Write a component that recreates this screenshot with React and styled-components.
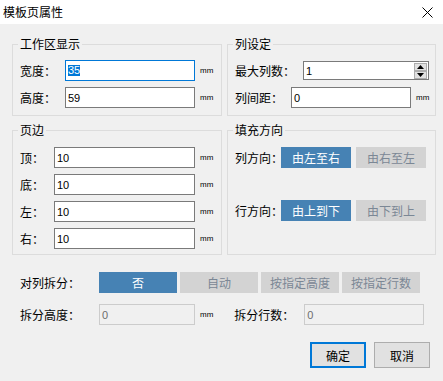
import React from 'react';
import styled, { createGlobalStyle } from 'styled-components';

const Global = createGlobalStyle`
  html, body { margin: 0; padding: 0; background: #f0f0f0; }
  body {
    font-family: "Noto Sans CJK SC", "Microsoft YaHei", sans-serif;
    font-size: 12px;
    color: #000;
  }
  * { box-sizing: border-box; }
`;

const Window = styled.div`
  width: 443px;
  height: 381px;
  background: #f0f0f0;
  display: flex;
  flex-direction: column;
  overflow: hidden;
`;

const TitleBar = styled.div`
  flex: none;
  height: 24px;
  background: #fff;
  display: flex;
  align-items: center;
  justify-content: space-between;
  padding: 0 10px 0 3px;
`;

const Title = styled.span`
  font-size: 12px;
  line-height: 14px;
`;

const Body = styled.div`
  padding: 12px 7px 0 12px;
  display: flex;
  flex-direction: column;
`;

const Groups = styled.div`
  display: grid;
  grid-template-columns: 210px 209px;
  column-gap: 5px;
  row-gap: 6px;
`;

const Group = styled.fieldset`
  margin: 0;
  padding: 0;
  min-width: 0;
  border: 1px solid #dcdcdc;
`;

const Legend = styled.legend`
  margin-left: 5px;
  padding: 0 2px;
  font-size: 12px;
  line-height: 16px;
`;

const GroupInner = styled.div`
  display: flex;
  flex-direction: column;
  gap: ${p => p.$gap}px;
  padding: ${p => p.$pt}px 0 ${p => p.$pb}px 7px;
`;

const Row = styled.div`
  display: flex;
  align-items: center;
  height: 21px;
`;

const Label = styled.span`
  flex: none;
  width: ${p => p.$w}px;
  font-size: 12px;
  white-space: nowrap;
`;

const Field = styled.div`
  flex: none;
  width: ${p => p.$w}px;
  height: ${p => p.$h || 21}px;
  border: 1px solid ${p => (p.$focus ? '#0078d7' : p.$disabled ? '#cccccc' : '#7a7a7a')};
  background: ${p => (p.$disabled ? '#f0f0f0' : '#fff')};
  color: ${p => (p.$disabled ? '#6d6d6d' : '#000')};
  display: flex;
  align-items: center;
  padding-left: 2px;
  font-family: "Liberation Sans", Arial, sans-serif;
  font-size: 11px;
`;

const Selected = styled.span`
  background: #0078d7;
  color: #fff;
  line-height: 11px;
`;

const Unit = styled.span`
  flex: none;
  margin-left: ${p => p.$ml || 6}px;
  margin-right: ${p => p.$mr || 0}px;
  font-family: "Liberation Sans", Arial, sans-serif;
  font-size: 8px;
  color: #000;
`;

const Spin = styled.div`
  margin-left: auto;
  margin-right: 1px;
  display: flex;
  flex-direction: column;
`;

const SpinBtn = styled.div`
  width: 13px;
  height: 8px;
  background: #e1e1e1;
  border: 1px solid #adadad;
  display: flex;
  align-items: center;
  justify-content: center;
`;

const ToggleRow = styled.div`
  display: flex;
  gap: ${p => p.$gap}px;
`;

const Toggle = styled.div`
  flex: none;
  width: ${p => p.$w}px;
  height: 21px;
  background: ${p => (p.$active ? '#4682b4' : '#d3d3d3')};
  color: ${p => (p.$active ? '#fff' : '#7b8795')};
  display: flex;
  align-items: center;
  justify-content: center;
  font-size: 12px;
`;

const Bottom = styled.div`
  display: flex;
  flex-direction: column;
  padding-left: 8px;
  margin-top: 17px;
  gap: 11px;
`;

const Footer = styled.div`
  display: flex;
  justify-content: flex-end;
  gap: 8px;
  margin-top: 17px;
  padding-right: 6px;
`;

const DlgButton = styled.button`
  width: 56px;
  height: 26px;
  padding: 0;
  background: #e1e1e1;
  border: ${p => (p.$default ? '2px solid #0078d7' : '1px solid #adadad')};
  font-family: "Noto Sans CJK SC", sans-serif;
  font-size: 12px;
  color: #000;
`;

const Tri = ({ up }) => (
  <svg width="7" height="4" viewBox="0 0 7 4">
    <polygon points={up ? '3.5,0 7,4 0,4' : '0,0 7,0 3.5,4'} fill="#000" />
  </svg>
);

const CloseIcon = () => (
  <svg width="11" height="11" viewBox="0 0 11 11">
    <path d="M0.5 0.5 L10.5 10.5 M10.5 0.5 L0.5 10.5" stroke="#000" strokeWidth="1" />
  </svg>
);

export default function App() {
  return (
    <>
      <Global />
      <Window>
        <TitleBar>
          <Title>模板页属性</Title>
          <CloseIcon />
        </TitleBar>
        <Body>
          <Groups>
            <Group>
              <Legend>工作区显示</Legend>
              <GroupInner $gap={6} $pt={8} $pb={7}>
                <Row>
                  <Label $w={45}>宽度：</Label>
                  <Field $w={130} $focus><Selected>35</Selected></Field>
                  <Unit $ml={5}>mm</Unit>
                </Row>
                <Row>
                  <Label $w={45}>高度：</Label>
                  <Field $w={130}>59</Field>
                  <Unit $ml={5}>mm</Unit>
                </Row>
              </GroupInner>
            </Group>
            <Group>
              <Legend>列设定</Legend>
              <GroupInner $gap={6} $pt={8} $pb={7}>
                <Row>
                  <Label $w={68}>最大列数：</Label>
                  <Field $w={126} $h={19}>
                    1
                    <Spin>
                      <SpinBtn><Tri up /></SpinBtn>
                      <SpinBtn><Tri /></SpinBtn>
                    </Spin>
                  </Field>
                </Row>
                <Row>
                  <Label $w={56}>列间距：</Label>
                  <Field $w={120}>0</Field>
                  <Unit $ml={5}>mm</Unit>
                </Row>
              </GroupInner>
            </Group>
            <Group>
              <Legend>页边</Legend>
              <GroupInner $gap={6} $pt={9} $pb={5}>
                {['顶', '底', '左', '右'].map(t => (
                  <Row key={t}>
                    <Label $w={34}>{t}：</Label>
                    <Field $w={141}>10</Field>
                    <Unit $ml={5}>mm</Unit>
                  </Row>
                ))}
              </GroupInner>
            </Group>
            <Group>
              <Legend>填充方向</Legend>
              <GroupInner $gap={32} $pt={9} $pb={5}>
                <Row>
                  <Label $w={46}>列方向：</Label>
                  <ToggleRow $gap={5}>
                    <Toggle $w={70} $active>由左至右</Toggle>
                    <Toggle $w={70}>由右至左</Toggle>
                  </ToggleRow>
                </Row>
                <Row>
                  <Label $w={46}>行方向：</Label>
                  <ToggleRow $gap={5}>
                    <Toggle $w={70} $active>由上到下</Toggle>
                    <Toggle $w={70}>由下到上</Toggle>
                  </ToggleRow>
                </Row>
              </GroupInner>
            </Group>
          </Groups>
          <Bottom>
            <Row>
              <Label $w={79}>对列拆分：</Label>
              <ToggleRow $gap={3}>
                <Toggle $w={78} $active>否</Toggle>
                <Toggle $w={78}>自动</Toggle>
                <Toggle $w={78}>按指定高度</Toggle>
                <Toggle $w={78}>按指定行数</Toggle>
              </ToggleRow>
            </Row>
            <Row>
              <Label $w={79}>拆分高度：</Label>
              <Field $w={96} $disabled>0</Field>
              <Unit $ml={5} $mr={21}>mm</Unit>
              <Label $w={70}>拆分行数：</Label>
              <Field $w={120} $disabled>0</Field>
            </Row>
          </Bottom>
          <Footer>
            <DlgButton $default>确定</DlgButton>
            <DlgButton>取消</DlgButton>
          </Footer>
        </Body>
      </Window>
    </>
  );
}
